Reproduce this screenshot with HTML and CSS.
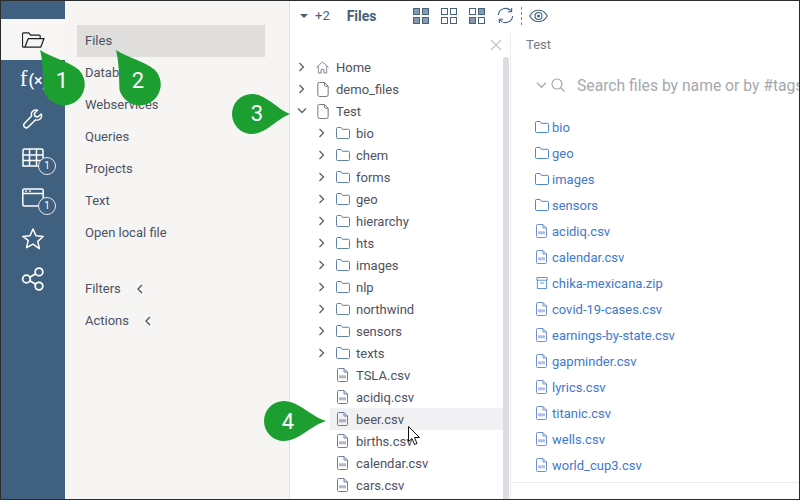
FILE: index.html
```html
<!DOCTYPE html>
<html lang="en">
<head>
<meta charset="utf-8">
<title>Files</title>
<link rel="stylesheet" href="styles.css">
</head>
<body>
<svg class="defs" aria-hidden="true">
  <symbol id="folder" viewBox="0 0 14 12"><path d="M1.500.5h3.600l1.300 1.800h6.100a1 1 0 0 1 1 1V10.500a1 1 0 0 1-1 1h-11a1 1 0 0 1-1-1V1.500a1 1 0 0 1 1-1z" fill="none" stroke="currentColor"/></symbol>
  <symbol id="doc" viewBox="0 0 12 16"><path d="M2 .5H7.500L11.500 4.500V13.500a2 2 0 0 1-2 2H2.500a2 2 0 0 1-2-2V2A1.500 1.500 0 0 1 2 .5zM7.500 .5V3.500a1 1 0 0 0 1 1h3" fill="none" stroke="currentColor"/></symbol>
  <symbol id="csv" viewBox="0 0 11 14"><path d="M1.500.5H7L10.500 4v8.500a1 1 0 0 1-1 1h-8a1 1 0 0 1-1-1v-11a1 1 0 0 1 1-1zM7 .5V4h3.500" fill="none" stroke="currentColor"/><rect x="2" y="7.300" width="7" height="3" fill="currentColor" opacity=".55"/></symbol>
  <symbol id="chev-r" viewBox="0 0 8 10"><path d="M1.500 1l4 4-4 4" fill="none" stroke="currentColor" stroke-width="1.300"/></symbol>
  <symbol id="chev-d" viewBox="0 0 10 8"><path d="M1 1.500l4 4 4-4" fill="none" stroke="currentColor" stroke-width="1.300"/></symbol>
  <symbol id="chev-l" viewBox="0 0 8 10"><path d="M6 1L2 5l4 4" fill="none" stroke="currentColor" stroke-width="1.300"/></symbol>
  <symbol id="pin-up" viewBox="0 0 46 56"><path d="M0 0C10 7 28 11 39 20A21 21 0 1 1 3.500 40C3 26 3 12 0 0Z" fill="#1d9e31"/></symbol>
</svg>
<div class="app">
  <nav class="rail">
    <div class="rail-item rail-active">
      <svg class="ic-folder" viewBox="0 0 24 16"><path d="M3 15.500H1.500a1 1 0 0 1-1-1V1.500a1 1 0 0 1 1-1h5.500l2 2.500h9a1 1 0 0 1 1 1V6.500M3 15.500h16.500l3.500-9H6.500z" fill="none" stroke="#1f1f24" stroke-width="1.300" stroke-linejoin="round"/></svg>
    </div>
    <div class="rail-item"><span class="fx"><i>f</i>(×)</span></div>
    <div class="rail-item">
      <svg class="ic wrench" viewBox="0 0 24 24"><path d="M21 6.500l-3.800 3.300-3-.8-.8-3L17 2.500c-2.800-.9-5.800.4-6.600 3-.3 1.200-.2 2.300.1 3.300L2.800 16.700a2.800 2.800 0 0 0 4 4l8-7.800c1 .4 2.200.4 3.300.1 2.800-.9 4-3.800 2.900-6.500z" fill="none" stroke="#fff" stroke-width="1.600" stroke-linejoin="round"/></svg>
    </div>
    <div class="rail-item">
      <svg class="ic" viewBox="0 0 22 20"><path d="M1 2.500a1.500 1.500 0 0 1 1.500-1.500h17a1.500 1.500 0 0 1 1.500 1.500V18H1z" fill="none" stroke="#fff" stroke-width="1.500"/><path d="M1 7h20M1 12.500h20M7.500 1v17M14.500 1v17" stroke="#fff" stroke-width="1.500"/></svg>
      <span class="badge">1</span>
    </div>
    <div class="rail-item">
      <svg class="ic" viewBox="0 0 22 20"><rect x=".8" y="1" width="20.400" height="17" rx="1.500" fill="none" stroke="#fff" stroke-width="1.500"/><path d="M1 5.500h20" stroke="#fff" stroke-width="1.500"/><path d="M3 3.200h2M7 3.200h2" stroke="#fff" stroke-width="1.200"/></svg>
      <span class="badge">1</span>
    </div>
    <div class="rail-item">
      <svg class="ic" viewBox="0 0 24 24"><path d="M12 2l3 6.800 7.200.7-5.400 4.900 1.600 7.300L12 17.100l-6.400 3.600 1.600-7.300L1.800 9.500 9 8.800z" fill="none" stroke="#fff" stroke-width="1.500" stroke-linejoin="round"/></svg>
    </div>
    <div class="rail-item">
      <svg class="ic" viewBox="0 0 22 22"><circle cx="16.500" cy="4.500" r="3.500" fill="none" stroke="#fff" stroke-width="1.600"/><circle cx="5" cy="11" r="3.500" fill="none" stroke="#fff" stroke-width="1.600"/><circle cx="16.500" cy="17.500" r="3.500" fill="none" stroke="#fff" stroke-width="1.600"/><path d="M8 9.300l5.500-3.100M8 12.700l5.500 3.100" stroke="#fff" stroke-width="1.600"/></svg>
    </div>
  </nav>

  <aside class="menu">
    <div class="menu-item menu-selected">Files</div>
    <div class="menu-item">Databases</div>
    <div class="menu-item">Webservices</div>
    <div class="menu-item">Queries</div>
    <div class="menu-item">Projects</div>
    <div class="menu-item">Text</div>
    <div class="menu-item">Open local file</div>
    <div class="menu-gap"></div>
    <div class="menu-item">Filters <svg class="chev-menu"><use href="#chev-l"/></svg></div>
    <div class="menu-item">Actions <svg class="chev-menu"><use href="#chev-l"/></svg></div>
  </aside>

  <main class="main">
    <header class="toolbar">
      <span class="caret"></span>
      <span class="plus">+2</span>
      <span class="title">Files</span>
      <div class="views">
        <div class="grid"><b class="on"></b><b class="on"></b><b class="on"></b><b class="on"></b></div>
        <div class="grid"><b></b><b></b><b></b><b></b></div>
        <div class="grid"><b></b><b class="on"></b><b class="on"></b><b></b></div>
      </div>
      <svg class="refresh" viewBox="0 0 18 18"><path d="M1.500 8.500A7.500 7.500 0 0 1 15 4.500M16.500 9.500A7.500 7.500 0 0 1 3 13.500" fill="none" stroke="#3f6290" stroke-width="1.200"/><path d="M15.500 1v4h-4M2.500 17v-4h4" fill="none" stroke="#3f6290" stroke-width="1.200"/></svg>
      <span class="dots"></span>
      <svg class="eye" viewBox="0 0 20 14"><path d="M.8 7C3 3 6 1 10 1s7 2 9.200 6C17 11 14 13 10 13S3 11 .8 7z" fill="none" stroke="#46627f" stroke-width="1.200"/><circle cx="10" cy="7" r="3.700" fill="none" stroke="#46627f" stroke-width="1.200"/><circle cx="10" cy="7" r="1.600" fill="#46627f"/></svg>
    </header>
    <div class="content">
      <section class="tree">
        <div class="tree-close"><svg viewBox="0 0 12 12"><path d="M1 1l10 10M11 1L1 11" stroke="#c3c6ca" stroke-width="1.200"/></svg></div>
        <div class="tree-body">
          <div class="rows">
            <div class="row"><svg class="tw"><use href="#chev-r"/></svg><svg class="ti home" viewBox="0 0 14 14"><path d="M.5 7L7 1l6.500 6M2.500 5.500V13h3V9h3v4h3V5.500" fill="none" stroke="#7a7f93"/></svg>Home</div>
            <div class="row"><svg class="tw"><use href="#chev-r"/></svg><svg class="ti doc"><use href="#doc"/></svg>demo_files</div>
            <div class="row"><svg class="tw-d"><use href="#chev-d"/></svg><svg class="ti doc"><use href="#doc"/></svg>Test</div>
            <div class="row l2"><svg class="tw"><use href="#chev-r"/></svg><svg class="ti fold"><use href="#folder"/></svg>bio</div>
            <div class="row l2"><svg class="tw"><use href="#chev-r"/></svg><svg class="ti fold"><use href="#folder"/></svg>chem</div>
            <div class="row l2"><svg class="tw"><use href="#chev-r"/></svg><svg class="ti fold"><use href="#folder"/></svg>forms</div>
            <div class="row l2"><svg class="tw"><use href="#chev-r"/></svg><svg class="ti fold"><use href="#folder"/></svg>geo</div>
            <div class="row l2"><svg class="tw"><use href="#chev-r"/></svg><svg class="ti fold"><use href="#folder"/></svg>hierarchy</div>
            <div class="row l2"><svg class="tw"><use href="#chev-r"/></svg><svg class="ti fold"><use href="#folder"/></svg>hts</div>
            <div class="row l2"><svg class="tw"><use href="#chev-r"/></svg><svg class="ti fold"><use href="#folder"/></svg>images</div>
            <div class="row l2"><svg class="tw"><use href="#chev-r"/></svg><svg class="ti fold"><use href="#folder"/></svg>nlp</div>
            <div class="row l2"><svg class="tw"><use href="#chev-r"/></svg><svg class="ti fold"><use href="#folder"/></svg>northwind</div>
            <div class="row l2"><svg class="tw"><use href="#chev-r"/></svg><svg class="ti fold"><use href="#folder"/></svg>sensors</div>
            <div class="row l2"><svg class="tw"><use href="#chev-r"/></svg><svg class="ti fold"><use href="#folder"/></svg>texts</div>
            <div class="row l3"><svg class="ti file"><use href="#csv"/></svg>TSLA.csv</div>
            <div class="row l3"><svg class="ti file"><use href="#csv"/></svg>acidiq.csv</div>
            <div class="row l3 hover"><svg class="ti file"><use href="#csv"/></svg>beer.csv</div>
            <div class="row l3"><svg class="ti file"><use href="#csv"/></svg>births.csv</div>
            <div class="row l3"><svg class="ti file"><use href="#csv"/></svg>calendar.csv</div>
            <div class="row l3"><svg class="ti file"><use href="#csv"/></svg>cars.csv</div>
          </div>
          <div class="scrollbar"></div>
        </div>
      </section>
      <section class="pane">
        <div class="crumb">Test</div>
        <div class="search">
          <svg class="s-chev"><use href="#chev-d"/></svg>
          <svg class="s-glass" viewBox="0 0 14 14"><circle cx="6" cy="6" r="5" fill="none" stroke="#9da2a8" stroke-width="1.100"/><path d="M9.600 9.600L13.500 13.500" stroke="#9da2a8" stroke-width="1.100"/></svg>
          <span class="s-text">Search files by name or by #tags</span>
        </div>
        <ul class="links">
          <li><svg class="li-ic"><use href="#folder"/></svg>bio</li>
          <li><svg class="li-ic"><use href="#folder"/></svg>geo</li>
          <li><svg class="li-ic"><use href="#folder"/></svg>images</li>
          <li><svg class="li-ic"><use href="#folder"/></svg>sensors</li>
          <li><svg class="li-ic csv"><use href="#csv"/></svg>acidiq.csv</li>
          <li><svg class="li-ic csv"><use href="#csv"/></svg>calendar.csv</li>
          <li><svg class="li-ic" viewBox="0 0 13 13"><path d="M1 .5h11v3H1zM1.500 3.500v9h10v-9M4.500 6.500h4" fill="none" stroke="currentColor"/></svg>chika-mexicana.zip</li>
          <li><svg class="li-ic csv"><use href="#csv"/></svg>covid-19-cases.csv</li>
          <li><svg class="li-ic csv"><use href="#csv"/></svg>earnings-by-state.csv</li>
          <li><svg class="li-ic csv"><use href="#csv"/></svg>gapminder.csv</li>
          <li><svg class="li-ic csv"><use href="#csv"/></svg>lyrics.csv</li>
          <li><svg class="li-ic csv"><use href="#csv"/></svg>titanic.csv</li>
          <li><svg class="li-ic csv"><use href="#csv"/></svg>wells.csv</li>
          <li><svg class="li-ic csv"><use href="#csv"/></svg>world_cup3.csv</li>
        </ul>
        <div class="pane-foot"></div>
      </section>
    </div>
  </main>

  <div class="pin pin1"><svg><use href="#pin-up"/></svg><span>1</span></div>
  <div class="pin pin2"><svg><use href="#pin-up"/></svg><span>2</span></div>
  <div class="pin pin3"><svg viewBox="0 0 58 40"><path d="M58 20C46 24 34 40 20 40A20 20 0 0 1 20 0C34 0 46 16 58 20Z" fill="#1d9e31"/></svg><span>3</span></div>
  <div class="pin pin4"><svg viewBox="0 0 62 40"><path d="M62 20C48 24 34 40 20 40A20 20 0 0 1 20 0C34 0 48 16 62 20Z" fill="#1d9e31"/></svg><span>4</span></div>
  <svg class="cursor" viewBox="0 0 13 20"><path d="M.5.500V15.500L4 12.500L6.500 18.500L9 17.500L6.500 11.500H11.500Z" fill="#fff" stroke="#111"/></svg>
</div>
</body>
</html>
```
FILE: styles.css
```css
* { box-sizing: border-box; }
html, body { margin: 0; padding: 0; }
body { width: 800px; height: 500px; overflow: hidden; font-family: Roboto, sans-serif; font-size: 13px; color: #4d5261; background: #fff; }
.defs { width: 0; height: 0; position: absolute; }
.app { position: relative; display: flex; width: 800px; height: 500px; border: 1px solid #2b2b2b; overflow: hidden; }

.rail { flex: 0 0 64px; background: #40607f; padding-top: 18px; display: flex; flex-direction: column; }
.rail-item { position: relative; height: 40px; display: flex; align-items: center; justify-content: center; color: #fff; }
.rail-active { background: #f7f6f5; height: 41px; margin-bottom: -1px; }
.ic-folder { width: 23px; height: 16px; }
.ic { width: 24px; height: 24px; }
.wrench { width: 22px; height: 22px; }
.rail-item:nth-child(4) .ic, .rail-item:nth-child(5) .ic { width: 22px; height: 20px; margin-top: -2px; }
.fx { font-family: Roboto, sans-serif; font-size: 16px; font-weight: 500; white-space: nowrap; margin-left: 2px; }
.fx i { font-family: "Liberation Serif", serif; font-style: normal; font-weight: 400; font-size: 23px; margin-right: 1px; }
.badge { position: absolute; left: 37px; top: 18px; width: 18px; height: 18px; border-radius: 50%; background: #40607f; border: 1px solid #e6e9ed; color: #fff; font-size: 10px; line-height: 16px; text-align: center; }

.menu { flex: 0 0 225px; background: #f6f5f4; border-right: 1px solid #e1e1e1; padding: 24px 24px 0 12px; display: flex; flex-direction: column; }
.menu-item { height: 32px; line-height: 32px; padding-left: 8px; flex: none; }
.menu-selected { background: #dfdedc; }
.menu-gap { height: 24px; flex: none; }
.chev-menu { width: 8px; height: 10px; margin-left: 12px; color: #4d5261; vertical-align: -1px; }

.main { flex: 1; min-width: 0; display: flex; flex-direction: column; }
.toolbar { height: 31px; flex: none; display: flex; align-items: center; padding: 0 0 2px 10px; }
.caret { width: 0; height: 0; border-left: 4px solid transparent; border-right: 4px solid transparent; border-top: 4px solid #46607a; }
.plus { margin-left: 7px; color: #46607a; }
.title { margin-left: 17px; font-weight: 700; font-size: 14px; color: #46607a; }
.views { display: flex; gap: 12px; margin-left: 36px; }
.grid { display: grid; grid-template-columns: 7px 7px; grid-template-rows: 7px 7px; gap: 2px; }
.grid b { border: 1px solid #46627f; }
.grid b.on { background: #8699ae; }
.refresh { width: 17px; height: 17px; margin-left: 12px; }
.dots { height: 18px; border-left: 1px dashed #7b8a99; margin-left: 7px; }
.eye { width: 19px; height: 14px; margin-left: 7px; }

.content { flex: 1; min-height: 0; display: flex; }
.tree { flex: 0 0 220px; display: flex; flex-direction: column; min-height: 0; }
.tree-close { height: 24px; flex: none; display: flex; justify-content: flex-end; padding: 7px 8px 0 0; }
.tree-close svg { width: 12px; height: 12px; }
.tree-body { flex: 1; display: flex; min-height: 0; }
.rows { flex: 1; overflow: hidden; }
.scrollbar { flex: 0 0 6px; background: #dcdde2; border-radius: 3px 3px 0 0; margin: 1px 1px 0 0; }
.row { height: 22px; display: flex; align-items: center; white-space: nowrap; padding-left: 8px; }
.row.l2 { padding-left: 28px; }
.row.l3 { padding-left: 47px; }
.hover { background: #f1f1f3; margin-left: 40px; padding-left: 7px !important; }
.tw { width: 8px; height: 10px; color: #5a5f6a; flex: none; margin-right: 10px; }
.tw-d { width: 10px; height: 8px; color: #5a5f6a; flex: none; margin: 0 9px 0 -1px; }
.ti { flex: none; margin-right: 7px; }
.home { width: 13px; height: 13px; }
.doc { width: 12px; height: 15px; color: #6b6f78; margin-left: 1px; margin-right: 7px; }
.fold { width: 14px; height: 12px; color: #5f83a8; margin-right: 6px; }
.file { width: 11px; height: 14px; color: #6d7e9c; margin-right: 8px; }

.pane { flex: 1; min-width: 0; border-left: 1px solid #ededed; display: flex; flex-direction: column; overflow: hidden; }
.crumb { height: 26px; line-height: 26px; padding-left: 15px; color: #777b80; flex: none; }
.search { height: 32px; margin-top: 11px; display: flex; align-items: center; padding-left: 24px; flex: none; white-space: nowrap; overflow: hidden; }
.s-chev { width: 13px; height: 9px; color: #a7abb0; flex: none; }
.s-glass { width: 14px; height: 14px; margin-left: 3px; flex: none; }
.s-text { margin-left: 12px; font-size: 15.700px; color: #a5a9ae; }
.links { list-style: none; margin: 13px 0 0; padding: 0 0 0 24px; flex: none; }
.links li { height: 26px; display: flex; align-items: center; color: #3f78cc; }
.li-ic { width: 14px; height: 12px; margin-right: 3px; color: #4a88d8; flex: none; }
.li-ic.csv { width: 11px; height: 14px; margin: 0 5px 0 1px; color: #6f8fd0; }
.pane-foot { border-top: 1px solid #ededed; margin-top: 4px; }

.pin { position: absolute; color: #fff; font-size: 22px; line-height: 1; }
.pin svg { display: block; width: 100%; height: 100%; overflow: visible; }
.pin span { position: absolute; transform: translate(-50%, -50%); }
.pin1 { left: 39px; top: 49px; width: 46px; height: 56px; }
.pin1 span { left: 22px; top: 31px; }
.pin2 { left: 115px; top: 49px; width: 46px; height: 56px; }
.pin2 span { left: 22px; top: 31px; }
.pin3 { left: 231px; top: 93px; width: 58px; height: 40px; }
.pin3 span { left: 25px; top: 20px; }
.pin4 { left: 263px; top: 400px; width: 62px; height: 40px; }
.pin4 span { left: 24px; top: 21px; }
.cursor { position: absolute; left: 407px; top: 425px; width: 13px; height: 20px; }
```
